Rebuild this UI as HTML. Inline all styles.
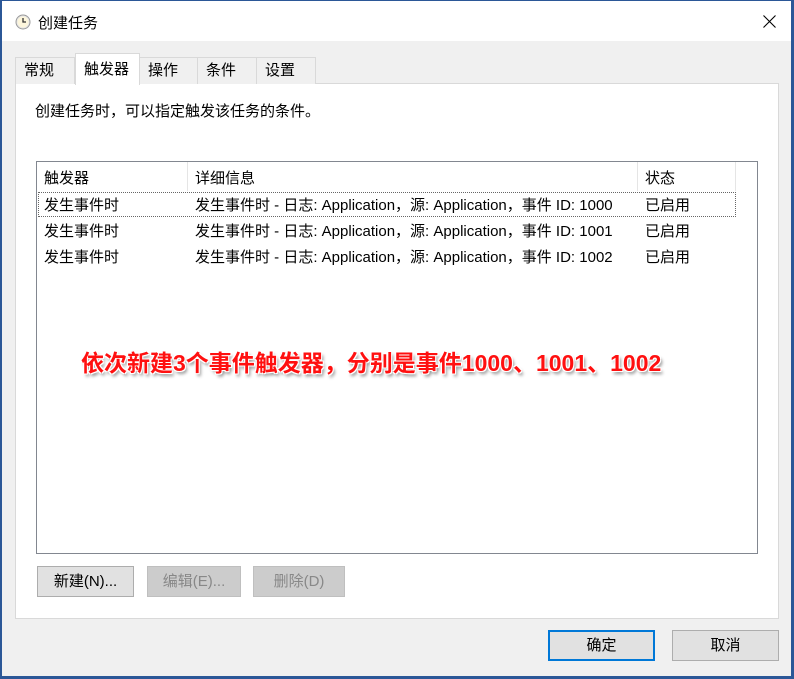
<!DOCTYPE html>
<html><head><meta charset="utf-8"><style>
*{margin:0;padding:0;box-sizing:border-box}
body{width:794px;height:679px;background:#2b5797;position:relative;overflow:hidden;font-family:"Liberation Sans","Microsoft YaHei","Noto Sans CJK SC",sans-serif;font-size:15px;color:#000}
.win{position:absolute;left:2px;top:1px;width:789px;height:675px;background:#f0f0f0}
.title{position:absolute;left:0;top:0;width:789px;height:40px;background:#fff}
.abs{position:absolute;white-space:nowrap}
.tab{position:absolute;top:56px;height:27px;border:1px solid #d9d9d9;border-bottom:none;background:#f0f0f0;padding:1px 0 0 8px;font-size:15px}
.panel{position:absolute;left:13px;top:82px;width:764px;height:536px;background:#fff;border:1px solid #d9d9d9}
.list{position:absolute;left:34px;top:160px;width:722px;height:393px;border:1px solid #828790;background:#fff}
.btn{position:absolute;height:31px;border:1px solid #adadad;background:#e1e1e1;text-align:center;line-height:29px;font-size:15px}
.red{position:absolute;left:79px;top:343px;color:#ff1010;font-size:23px;font-weight:bold;white-space:nowrap;text-shadow:1px 1px 0 #fff,-1px -1px 0 #fff,1px -1px 0 #fff,-1px 1px 0 #fff,2px 3px 3px rgba(0,0,0,.45)}
</style></head><body>
<div class="win">
 <div class="title">
  <svg class="abs" style="left:13px;top:13px" width="16" height="16" viewBox="0 0 16 16"><circle cx="8" cy="8" r="7" fill="#e8e8e8" stroke="#999"/><circle cx="8" cy="8" r="5.5" fill="#fdf6dc"/><path d="M8 4v4h3" stroke="#333" stroke-width="1.3" fill="none"/></svg>
  <div class="abs" style="left:36px;top:11px;font-size:15px">创建任务</div>
  <svg class="abs" style="left:761px;top:14px" width="13" height="13" viewBox="0 0 13 13"><path d="M0.5 0.5L12.5 12.5M12.5 0.5L0.5 12.5" stroke="#000" stroke-width="1.1"/></svg>
 </div>
 <div class="panel"></div>
 <div class="tab" style="left:13px;width:60px">常规</div>
 <div class="tab" style="left:137px;width:59px">操作</div>
 <div class="tab" style="left:195px;width:60px">条件</div>
 <div class="tab" style="left:254px;width:60px">设置</div>
 <div class="tab" style="left:73px;top:52px;height:32px;width:65px;background:#fff;padding-top:4px;z-index:2">触发器</div>
 <div class="abs" style="left:33px;top:99px">创建任务时，可以指定触发该任务的条件。</div>
 <div class="list">
  <div class="abs" style="left:150px;top:0;width:1px;height:29px;background:#e5e5e5"></div>
  <div class="abs" style="left:600px;top:0;width:1px;height:29px;background:#e5e5e5"></div>
  <div class="abs" style="left:698px;top:0;width:1px;height:29px;background:#e5e5e5"></div>
  <div class="abs" style="left:7px;top:5px">触发器</div>
  <div class="abs" style="left:158px;top:5px">详细信息</div>
  <div class="abs" style="left:608px;top:5px">状态</div>
  <div class="abs" style="left:1px;top:30px;width:698px;height:25px;border:1px dotted #666"></div>
  <div class="abs" style="left:7px;top:32px">发生事件时</div><div class="abs" style="left:158px;top:32px">发生事件时 - 日志: Application，源: Application，事件 ID: 1000</div><div class="abs" style="left:608px;top:32px">已启用</div>
  <div class="abs" style="left:7px;top:58px">发生事件时</div><div class="abs" style="left:158px;top:58px">发生事件时 - 日志: Application，源: Application，事件 ID: 1001</div><div class="abs" style="left:608px;top:58px">已启用</div>
  <div class="abs" style="left:7px;top:84px">发生事件时</div><div class="abs" style="left:158px;top:84px">发生事件时 - 日志: Application，源: Application，事件 ID: 1002</div><div class="abs" style="left:608px;top:84px">已启用</div>
 </div>
 <div class="red">依次新建3个事件触发器，分别是事件1000、1001、1002</div>
 <div class="btn" style="left:35px;top:565px;width:97px">新建(N)...</div>
 <div class="btn" style="left:145px;top:565px;width:94px;color:#888;background:#ccc;border-color:#bfbfbf">编辑(E)...</div>
 <div class="btn" style="left:251px;top:565px;width:92px;color:#888;background:#ccc;border-color:#bfbfbf">删除(D)</div>
 <div class="btn" style="left:546px;top:629px;width:107px;border:2px solid #0078d7;line-height:27px">确定</div>
 <div class="btn" style="left:670px;top:629px;width:107px">取消</div>
</div>
</body></html>
